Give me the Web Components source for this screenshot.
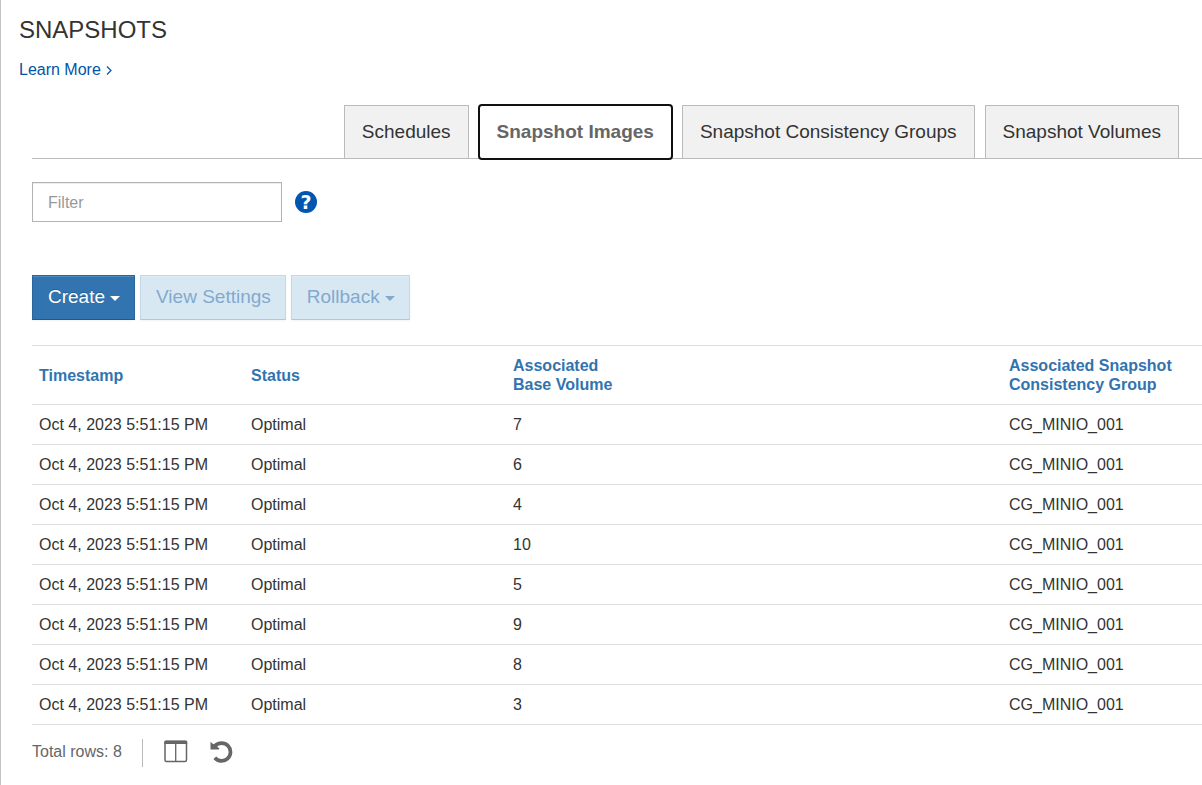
<!DOCTYPE html>
<html lang="en">
<head>
<meta charset="utf-8">
<title>Snapshots</title>
<style>
  body { margin: 0; background: #fff; color: #333; font: 16px/20px "Liberation Sans", Arial, sans-serif; }
</style>
</head>
<body>
<snapshots-page>
  <page-heading slot="heading" href="#learn">SNAPSHOTS</page-heading>
  <tab-bar slot="tabs">
    <tab-item>Schedules</tab-item>
    <tab-item selected>Snapshot Images</tab-item>
    <tab-item>Snapshot Consistency Groups</tab-item>
    <tab-item>Snapshot Volumes</tab-item>
  </tab-bar>
  <filter-box></filter-box>
  <action-bar>
    <action-button variant="primary" menu>Create</action-button>
    <action-button disabled>View Settings</action-button>
    <action-button disabled menu>Rollback</action-button>
  </action-bar>
  <snapshot-table></snapshot-table>
  <table-footer></table-footer>
</snapshots-page>

<script>
class BaseElement extends HTMLElement {
  connectedCallback() {
    if (this.shadowRoot) return;
    this.attachShadow({ mode: 'open' }).innerHTML =
      '<style>*{box-sizing:border-box}button,input{font:inherit;margin:0}</style>' + this.render();
  }
}

customElements.define('snapshots-page', class extends BaseElement {
  render() {
    return `<style>
      :host { display: flex; flex-direction: column; min-height: 100vh; box-sizing: border-box; border-left: 1px solid #c4c4c4; }
      main { padding-left: 31px; }
    </style>
    <slot name="heading"></slot>
    <main><slot name="tabs"></slot><slot></slot></main>`;
  }
});

customElements.define('page-heading', class extends BaseElement {
  render() {
    return `<style>
      :host { display: block; padding: 16px 18px 23px; }
      h1 { margin: 0 0 16px; font-size: 24px; line-height: 28px; font-weight: 400; }
      a { display: inline-flex; align-items: center; gap: 5px; color: #0055a8; text-decoration: none; }
      svg { display: block; }
    </style>
    <h1><slot></slot></h1>
    <a href="${this.getAttribute('href')}">Learn More
      <svg width="6" height="9" viewBox="0 0 6 9" fill="none" stroke="currentColor" stroke-width="1.2" aria-hidden="true"><path d="M1 .5l4 4-4 4"/></svg>
    </a>`;
  }
});

customElements.define('tab-bar', class extends BaseElement {
  render() {
    return `<style>
      :host { display: block; }
      nav { display: flex; justify-content: flex-end; gap: 10px; padding: 2px 23px 0 0; border-bottom: 1px solid #bbb; }
    </style>
    <nav role="tablist"><slot></slot></nav>`;
  }
});

customElements.define('tab-item', class extends BaseElement {
  render() {
    const selected = this.hasAttribute('selected');
    return `<style>
      :host { display: block; margin-bottom: -1px; }
      button { display: block; height: 54px; padding: 0 17px; border: 1px solid #bbb; border-radius: 0; background: #f1f1f1; color: #333; font-size: 19px; line-height: 24px; white-space: nowrap; }
      button[aria-selected="true"] { border-color: #fff; background: #fff; color: #666; font-weight: 700; outline: 2px solid #101010; outline-offset: -1px; border-radius: 3px; }
    </style>
    <button role="tab" aria-selected="${selected}"><slot></slot></button>`;
  }
});

customElements.define('filter-box', class extends BaseElement {
  render() {
    return `<style>
      :host { display: flex; align-items: center; gap: 13px; padding: 23px 0 53px; }
      input { width: 250px; height: 40px; padding: 2px 15px 0; border: 1px solid #b3b3b3; border-radius: 0; background: #fff; box-shadow: inset 0 1px 1px rgba(0,0,0,.075); color: #333; }
      input::placeholder { color: #999; opacity: 1; }
      button { width: 22px; height: 22px; padding: 0; border: 0; border-radius: 50%; background: #0056b0; color: #fff; font: 700 19px/22px "DejaVu Sans", sans-serif; }
    </style>
    <input type="text" placeholder="Filter" aria-label="Filter">
    <button aria-label="Filter help">?</button>`;
  }
});

customElements.define('action-bar', class extends BaseElement {
  render() {
    return `<style>:host { display: flex; gap: 5px; }</style><slot></slot>`;
  }
});

customElements.define('action-button', class extends BaseElement {
  render() {
    const disabled = this.hasAttribute('disabled') ? 'disabled' : '';
    const caret = this.hasAttribute('menu')
      ? '<svg width="10" height="5" viewBox="0 0 10 5" fill="currentColor" aria-hidden="true"><path d="M0 0h10L5 5z"/></svg>' : '';
    return `<style>
      :host { display: block; }
      button { display: flex; align-items: center; gap: 5px; height: 45px; padding: 0 14px 2px 15px; border: 1px solid #2b659b; border-bottom-color: #265885; border-radius: 0; background: #3174af; color: #fff; font-size: 19px; line-height: 24px; text-shadow: 0 -1px 0 rgba(0,0,0,.2); box-shadow: inset 0 1px 0 rgba(255,255,255,.15), 0 1px 2px rgba(0,0,0,.05); white-space: nowrap; }
      button:disabled { border-color: #c5d8e5; border-bottom-color: #b3c8d6; background: #d8e8f2; color: #83a9ce; text-shadow: none; }
      svg { display: block; margin-top: 4px; }
    </style>
    <button ${disabled}><slot></slot>${caret}</button>`;
  }
});

customElements.define('snapshot-table', class extends BaseElement {
  render() {
    const volumes = [7, 6, 4, 10, 5, 9, 8, 3];
    const rows = volumes.map(v =>
      `<tr><td>Oct 4, 2023 5:51:15 PM</td><td>Optimal</td><td>${v}</td><td>CG_MINIO_001</td></tr>`).join('');
    return `<style>
      :host { display: block; margin-top: 25px; }
      table { width: 100%; table-layout: fixed; border-spacing: 0; border-top: 1px solid #ddd; }
      .time { width: 212px; } .status { width: 262px; } .group { width: 200px; }
      th, td { padding: 0 0 0 7px; border-bottom: 1px solid #ddd; text-align: left; vertical-align: middle; }
      th { height: 59px; color: #3174af; line-height: 19px; }
      td { height: 40px; line-height: 20px; color: #333; white-space: nowrap; }
    </style>
    <table>
      <colgroup><col class="time"><col class="status"><col><col class="group"></colgroup>
      <thead><tr><th scope="col">Timestamp</th><th scope="col">Status</th><th scope="col">Associated<br>Base Volume</th><th scope="col">Associated Snapshot<br>Consistency Group</th></tr></thead>
      <tbody>${rows}</tbody>
    </table>`;
  }
});

customElements.define('table-footer', class extends BaseElement {
  render() {
    return `<style>
      :host { display: flex; align-items: center; padding-top: 14px; color: #666; }
      .total { line-height: 20px; padding-bottom: 3px; }
      .rule { width: 1px; height: 28px; margin: 0 20px; background: #bbb; }
      .tools { display: flex; gap: 22px; padding-bottom: 4px; }
      button { display: block; padding: 0; border: 0; background: none; color: #666; }
      svg { display: block; }
    </style>
    <span class="total">Total rows: 8</span>
    <span class="rule"></span>
    <div class="tools">
      <button aria-label="Choose columns"><svg width="25" height="23" viewBox="0 0 25 23"><rect x="2" y="1.500" width="21.500" height="20" rx="1.500" fill="none" stroke="currentColor" stroke-width="1.500"/><path d="M2.200 .6h21.100l.9 1V4H1.300V1.600z" fill="currentColor"/><path d="M12.700 3v18" stroke="currentColor" stroke-width="1.300"/></svg></button>
      <button aria-label="Reset"><svg width="23" height="23" viewBox="0 0 23 23"><path d="M5.200 5.800A8.900 8.900 0 1 1 4.800 17.700" fill="none" stroke="currentColor" stroke-width="3.700"/><path d="M.5 1.800L3.300 4.300 6 3.200 7.500 7 9.500 8.500 8.800 9.500H.5z" fill="currentColor"/></svg></button>
    </div>`;
  }
});
</script>
</body>
</html>
